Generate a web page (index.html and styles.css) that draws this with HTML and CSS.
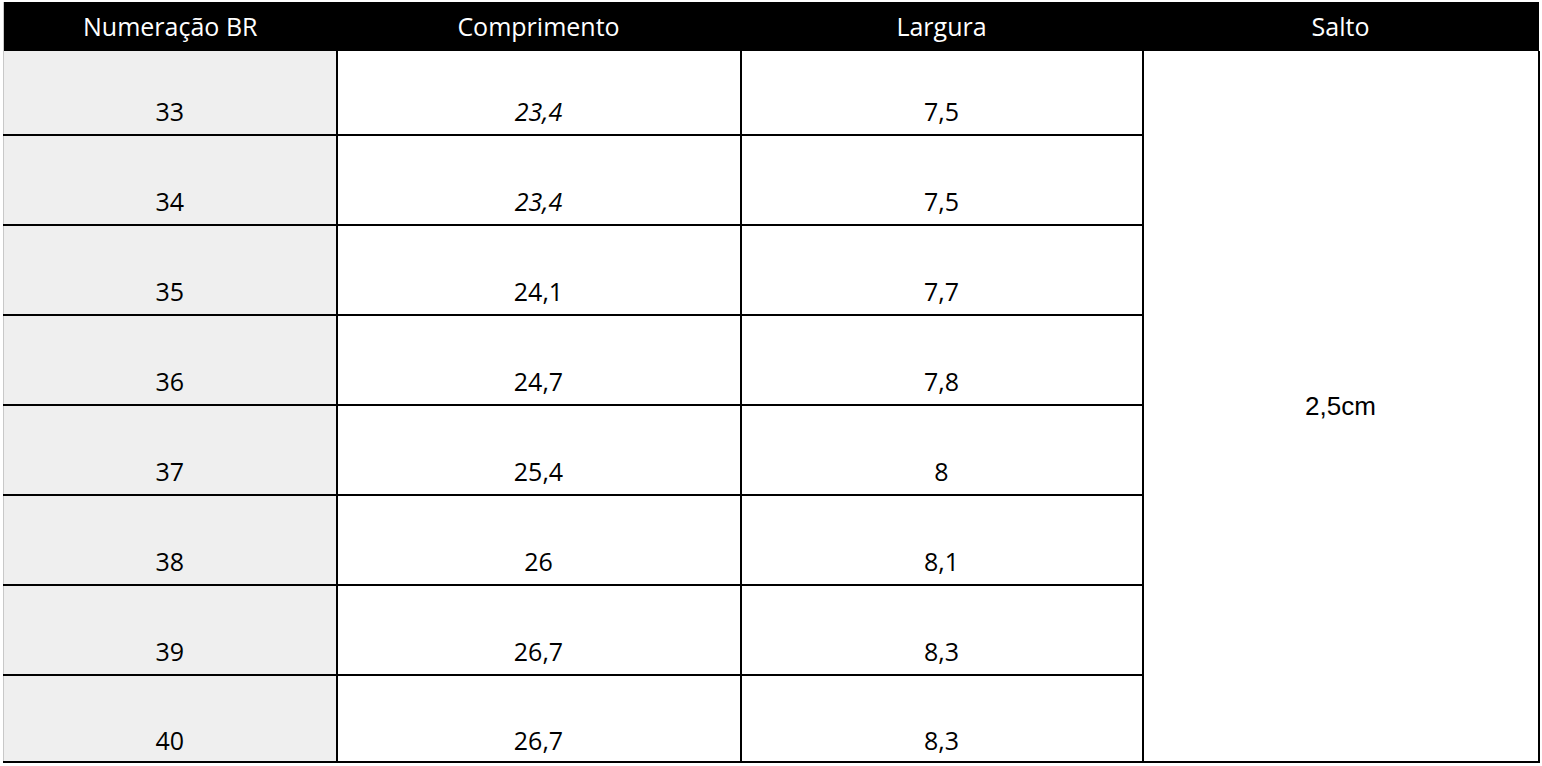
FILE: index.html
```html
<!DOCTYPE html>
<html lang="pt-BR">
<head>
<meta charset="utf-8">
<title>Tabela de medidas</title>
<link rel="stylesheet" href="styles.css">
</head>
<body>
<table class="size-table">
  <colgroup>
    <col class="c1"><col class="c2"><col class="c3"><col class="c4">
  </colgroup>
  <thead>
    <tr class="head-row">
      <th>Numeração BR</th>
      <th>Comprimento</th>
      <th>Largura</th>
      <th>Salto</th>
    </tr>
  </thead>
  <tbody>
    <tr class="row first">
      <td class="num">33</td>
      <td class="it">23,4</td>
      <td>7,5</td>
      <td class="salto" rowspan="8">2,5cm</td>
    </tr>
    <tr class="row"><td class="num">34</td><td class="it">23,4</td><td>7,5</td></tr>
    <tr class="row"><td class="num">35</td><td>24,1</td><td>7,7</td></tr>
    <tr class="row"><td class="num">36</td><td>24,7</td><td>7,8</td></tr>
    <tr class="row"><td class="num">37</td><td>25,4</td><td>8</td></tr>
    <tr class="row"><td class="num">38</td><td>26</td><td>8,1</td></tr>
    <tr class="row"><td class="num">39</td><td>26,7</td><td>8,3</td></tr>
    <tr class="row last"><td class="num">40</td><td>26,7</td><td>8,3</td></tr>
  </tbody>
</table>
</body>
</html>
```

FILE: styles.css
```css
html, body {
  margin: 0;
  padding: 0;
  background: #ffffff;
}

body {
  padding: 2px 0 0 3px;
  font-family: "Open Sans", "Liberation Sans", sans-serif;
  color: #000000;
}

.size-table {
  border-collapse: collapse;
  table-layout: fixed;
  width: 1535px;
}

.c1 { width: 333px; }
.c2 { width: 404px; }
.c3 { width: 402px; }
.c4 { width: 396px; }

.head-row th {
  background: #000000;
  color: #ffffff;
  font-weight: 400;
  font-size: 25px;
  line-height: 30px;
  height: 47px;
  padding: 0 0 2px 0;
  text-align: center;
  vertical-align: middle;
  border: 0;
  border-left: 1px solid #c8c8c8;
}

.head-row th + th {
  border-left: 0;
}

.row td {
  height: 80px;
  padding: 0 0 8px 0;
  text-align: center;
  vertical-align: bottom;
  font-size: 25px;
  line-height: 30px;
  border: 2px solid #000000;
}

.row.first td {
  height: 75px;
  border-top: 0;
}

.row.last td {
  height: 79px;
  padding-bottom: 6px;
}

.row td.num {
  background: #efefef;
  border-left: 1px solid #c8c8c8;
}

.row td.it {
  font-style: italic;
}

.row td.salto {
  vertical-align: middle;
  font-family: "Liberation Sans", Arial, sans-serif;
  font-size: 26px;
  padding: 0;
}
```
